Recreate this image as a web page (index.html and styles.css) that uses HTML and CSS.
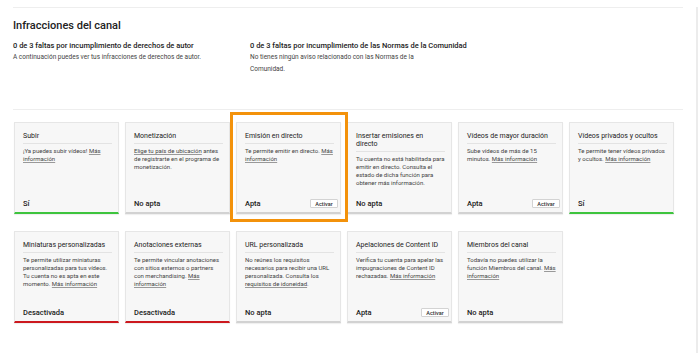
FILE: index.html
```html
<!DOCTYPE html>
<html lang="es">

<head>
    <meta charset="UTF-8">
    <meta name="viewport" content="width=device-width, initial-scale=1.0">
    <title>Estado y funciones</title>
    <link rel="stylesheet" href="styles.css">
</head>

<body>
    <div class="page">
        <section class="strikes">
            <h1>Infracciones del canal</h1>
            <div class="strike-cols">
                <div class="strike">
                    <h2>0 de 3 faltas por incumplimiento de derechos de autor</h2>
                    <p>A continuación puedes ver tus infracciones de derechos de autor.</p>
                </div>
                <div class="strike community">
                    <h2>0 de 3 faltas por incumplimiento de las Normas de la Comunidad</h2>
                    <p>No tienes ningún aviso relacionado con las Normas de la Comunidad.</p>
                </div>
            </div>
        </section>

        <div class="features">
            <div class="card ok">
                <h3>Subir</h3>
                <p>¡Ya puedes subir vídeos! <a href="#">Más información</a></p>
                <div class="status"><span>Sí</span></div>
            </div>
            <div class="card">
                <h3>Monetización</h3>
                <p><a href="#">Elige tu país de ubicación</a> antes de registrarte en el programa de monetización.</p>
                <div class="status"><span>No apta</span></div>
            </div>
            <div class="card highlight">
                <h3>Emisión en directo</h3>
                <p>Te permite emitir en directo. <a href="#">Más información</a></p>
                <div class="status"><span>Apta</span><button class="enable-btn">Activar</button></div>
            </div>
            <div class="card">
                <h3>Insertar emisiones en directo</h3>
                <p>Tu cuenta no está habilitada para emitir en directo. Consulta el estado de dicha función para obtener más información.</p>
                <div class="status"><span>No apta</span></div>
            </div>
            <div class="card">
                <h3>Vídeos de mayor duración</h3>
                <p>Sube vídeos de más de 15 minutos. <a href="#">Más información</a></p>
                <div class="status"><span>Apta</span><button class="enable-btn">Activar</button></div>
            </div>
            <div class="card ok">
                <h3>Vídeos privados y ocultos</h3>
                <p>Te permite tener vídeos privados y ocultos. <a href="#">Más información</a></p>
                <div class="status"><span>Sí</span></div>
            </div>

            <div class="card off">
                <h3>Miniaturas personalizadas</h3>
                <p>Te permite utilizar miniaturas personalizadas para tus vídeos. Tu cuenta no es apta en este momento. <a href="#">Más información</a></p>
                <div class="status"><span>Desactivada</span></div>
            </div>
            <div class="card off">
                <h3>Anotaciones externas</h3>
                <p>Te permite vincular anotaciones con sitios externos o partners con merchandising. <a href="#">Más información</a></p>
                <div class="status"><span>Desactivada</span></div>
            </div>
            <div class="card">
                <h3>URL personalizada</h3>
                <p>No reúnes los requisitos necesarios para recibir una URL personalizada. Consulta los <a href="#">requisitos de idoneidad</a>.</p>
                <div class="status"><span>No apta</span></div>
            </div>
            <div class="card">
                <h3>Apelaciones de Content ID</h3>
                <p>Verifica tu cuenta para apelar las impugnaciones de Content ID rechazadas. <a href="#">Más información</a></p>
                <div class="status"><span>Apta</span><button class="enable-btn">Activar</button></div>
            </div>
            <div class="card">
                <h3>Miembros del canal</h3>
                <p>Todavía no puedes utilizar la función Miembros del canal. <a href="#">Más información</a></p>
                <div class="status"><span>No apta</span></div>
            </div>
        </div>
    </div>
</body>

</html>
```

FILE: styles.css
```css
body {
    margin: 0;
    padding: 0;
    background-color: #fff;
    font-family: Roboto, "Liberation Sans", sans-serif;
    color: #333;
}

.page {
    width: 698px;
    height: 353px;
    box-sizing: border-box;
    border-right: 2px solid #ececec;
}

/* infracciones */
.strikes {
    margin: 7px 13px 0 13px;
    height: 103px;
    box-sizing: border-box;
    border-top: 1px solid #eeeeee;
    border-bottom: 1px solid #eeeeee;
}

.strikes h1 {
    margin: 0;
    padding-top: 11px;
    font-size: 11px;
    line-height: 13px;
    font-weight: 500;
    color: #222;
}

.strike-cols {
    display: flex;
    margin-top: 9px;
}

.strike {
    width: 237px;
}

.strike.community {
    width: 230px;
}

.strike h2 {
    margin: 0;
    font-size: 7.5px;
    line-height: 10px;
    font-weight: 500;
    color: #222;
    white-space: nowrap;
}

.strike p {
    margin: 0;
    font-size: 6.5px;
    line-height: 12px;
    color: #444;
}

.strike.community p {
    max-width: 182px;
}

/* tarjetas de funciones */
.features {
    display: grid;
    grid-template-columns: repeat(6, 105px);
    grid-auto-rows: 92px;
    column-gap: 6px;
    row-gap: 17px;
    margin: 12px 0 0 14px;
}

.card {
    display: flex;
    flex-direction: column;
    box-sizing: border-box;
    padding: 0 6px 0 8px;
    background-color: #f7f7f7;
    border: 1px solid #e6e6e6;
    border-bottom: 2px solid #d2d2d2;
    box-shadow: 0 1px 1px rgba(0, 0, 0, 0.06);
}

.card.ok {
    border-bottom-color: #3ec43e;
}

.card.off {
    border-bottom-color: #cc181e;
}

.card h3 {
    margin: 0;
    padding: 9px 0 3px;
    font-size: 7px;
    line-height: 8px;
    font-weight: 400;
    color: #222;
    border-bottom: 1px solid #e3e3e3;
}

.card p {
    margin: 3px 0 0;
    font-size: 6px;
    line-height: 8px;
    color: #444;
}

.card a {
    color: #444;
    text-decoration: underline;
    text-decoration-color: #999;
}

.status {
    display: flex;
    align-items: center;
    justify-content: space-between;
    height: 9px;
    margin-top: auto;
    margin-right: -4px;
    padding-bottom: 4px;
    font-size: 7.5px;
    font-weight: 500;
    color: #222;
}

.enable-btn {
    width: 28px;
    height: 9px;
    padding: 0;
    background-color: #fff;
    border: 1px solid #d3d3d3;
    border-radius: 1px;
    font-family: inherit;
    font-size: 5.5px;
    font-weight: 500;
    color: #333;
    cursor: pointer;
}

/* recuadro resaltado */
.card.highlight {
    position: relative;
}

.card.highlight::after {
    content: '';
    position: absolute;
    left: -7px;
    top: -11px;
    right: -8px;
    bottom: -10px;
    border: 3px solid #f3920b;
    pointer-events: none;
}
```
